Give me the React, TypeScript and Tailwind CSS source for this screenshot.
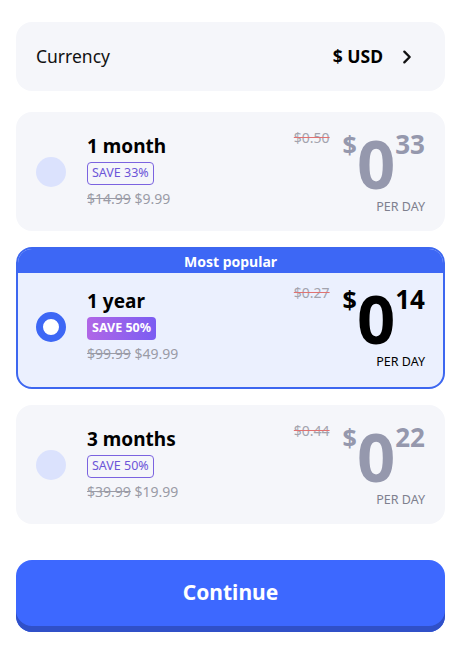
import React from 'react';

interface Plan {
  id: string;
  title: string;
  save: string;
  oldTotal: string;
  total: string;
  oldDaily: string;
  cents: string;
}

const plans: Plan[] = [
  { id: 'm1', title: '1 month', save: 'SAVE 33%', oldTotal: '$14.99', total: '$9.99', oldDaily: '$0.50', cents: '33' },
  { id: 'y1', title: '1 year', save: 'SAVE 50%', oldTotal: '$99.99', total: '$49.99', oldDaily: '$0.27', cents: '14' },
  { id: 'm3', title: '3 months', save: 'SAVE 50%', oldTotal: '$39.99', total: '$19.99', oldDaily: '$0.44', cents: '22' },
];

const ChevronRight = () => (
  <svg width="16" height="16" viewBox="0 0 24 24" fill="none" stroke="#111" strokeWidth="3.5" strokeLinecap="round" strokeLinejoin="round">
    <path d="M8 4l8 8-8 8" />
  </svg>
);

const PlanBody = ({ plan, selected }: { plan: Plan; selected: boolean }) => (
  <div className="flex items-center pl-5 pr-5">
    {selected ? (
      <div className="w-[30px] h-[30px] rounded-full border-[7px] border-[#3d67f5] bg-white shrink-0" />
    ) : (
      <div className="w-[30px] h-[30px] rounded-full bg-[#dbe2fd] shrink-0" />
    )}
    <div className="ml-[21px] flex flex-col items-start">
      <div className="text-[19px] font-bold leading-[24px] text-black">{plan.title}</div>
      {selected ? (
        <div className="mt-[4px] h-[23px] px-[5px] flex items-center rounded-[4px] bg-gradient-to-r from-[#b066e6] to-[#7b5cf2] text-white text-[12.5px] font-bold">
          {plan.save}
        </div>
      ) : (
        <div className="mt-[4px] h-[23px] px-[4px] flex items-center rounded-[4px] border border-[#7b63e0] text-[#6c55d8] text-[12.5px]">
          {plan.save}
        </div>
      )}
      <div className="mt-[4px] text-[14px] leading-[20px] text-[#9a9ba6]">
        <span className="line-through">{plan.oldTotal}</span> {plan.total}
      </div>
    </div>
    <div className="ml-auto flex flex-col items-end">
      <div className="flex items-start">
        <span className="mt-[-2px] text-[14px] leading-[20px] text-[#a3a3ad] line-through decoration-[#e07272]">{plan.oldDaily}</span>
        <span className={`ml-[13px] text-[25px] font-bold leading-[28px] ${selected ? 'text-black' : 'text-[#9598ad]'}`}>$</span>
        <span className={`mt-[8px] text-[67px] font-bold leading-[50px] tracking-[-1px] ${selected ? 'text-black' : 'text-[#9598ad]'}`}>0</span>
        <span className={`ml-[1px] text-[26px] font-bold leading-[28px] ${selected ? 'text-black' : 'text-[#9598ad]'}`}>{plan.cents}</span>
      </div>
      <div className={`mt-[12px] text-[12.5px] leading-[14px] ${selected ? 'text-black' : 'text-[#7e808e]'}`}>PER DAY</div>
    </div>
  </div>
);

const App = () => {
  const [selected, setSelected] = React.useState('y1');

  return (
    <div className="min-h-screen bg-white pl-4 pr-[18px] pt-[22px]" style={{ fontFamily: '"Noto Sans", "Open Sans", sans-serif' }}>
      <div className="h-[69px] rounded-[16px] bg-[#f5f6fa] flex items-center pl-5 pr-[30px]">
        <span className="text-[17.5px] text-[#111]">Currency</span>
        <span className="ml-auto text-[17.5px] font-bold text-black">$ USD</span>
        <span className="ml-[16px] flex items-center"><ChevronRight /></span>
      </div>

      <div className="mt-[21px] flex flex-col gap-4">
        {plans.map((plan) => {
          const isSel = plan.id === selected;
          if (isSel) {
            return (
              <div
                key={plan.id}
                onClick={() => setSelected(plan.id)}
                className="rounded-[16px] border-2 border-[#3d67f0] bg-[#ebf0fe] overflow-hidden"
              >
                <div className="h-[24px] bg-[#3d67f5] text-white text-[14px] font-bold flex items-center justify-center">
                  Most popular
                </div>
                <div className="h-[114px] flex flex-col justify-center pb-[7px]">
                  <div className="-mx-[2px]">
                    <PlanBody plan={plan} selected />
                  </div>
                </div>
              </div>
            );
          }
          return (
            <div
              key={plan.id}
              onClick={() => setSelected(plan.id)}
              className="h-[119px] rounded-[16px] bg-[#f5f6fa] flex flex-col justify-center"
            >
              <PlanBody plan={plan} selected={false} />
            </div>
          );
        })}
      </div>

      <button className="mt-[36px] w-full h-[72px] rounded-[16px] bg-[#3d68ff] shadow-[inset_0_-6px_0_#3050c8] text-white text-[21px] font-bold pb-[6px]">
        Continue
      </button>
    </div>
  );
};

export default App;
